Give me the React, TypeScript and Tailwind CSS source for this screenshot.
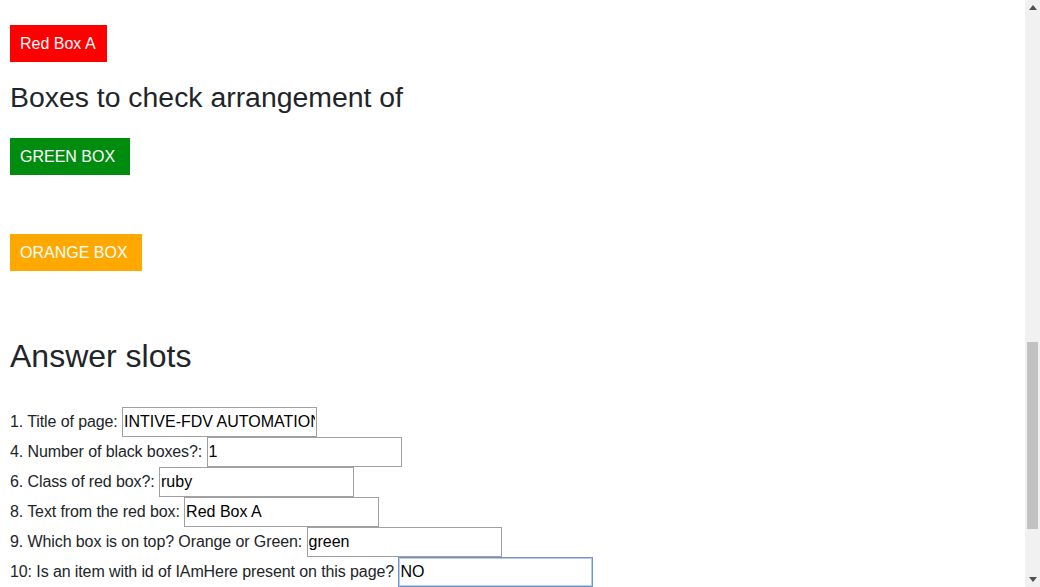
import { ReactNode } from 'react';

// ===== boxes =====
interface ColorBoxProps {
  children: ReactNode;
  className?: string;
}

function ColorBox({ children, className = '' }: ColorBoxProps) {
  return (
    <div className={`flex h-[37px] w-fit items-center pl-[10px] text-[16px] text-white ${className}`}>
      {children}
    </div>
  );
}

// ===== answer rows =====
interface AnswerRowProps {
  label: string;
  value: string;
  focused?: boolean;
}

function AnswerRow({ label, value, focused = false }: AnswerRowProps) {
  return (
    <div className="flex h-[30px] items-center">
      <span className="whitespace-pre text-[16px] tracking-[-0.1px]">{label} </span>
      <input
        defaultValue={value}
        autoFocus={focused}
        className={`h-[30px] w-[195px] border bg-white px-[1px] text-[16px] text-black outline-none ${
          focused ? 'border-[#7090d4] ring-1 ring-[#b9cbef] ring-inset' : 'border-[#a0a0a0]'
        }`}
      />
    </div>
  );
}

const answers = [
  { label: '1. Title of page:', value: 'INTIVE-FDV AUTOMATION' },
  { label: '4. Number of black boxes?:', value: '1' },
  { label: '6. Class of red box?:', value: 'ruby' },
  { label: '8. Text from the red box:', value: 'Red Box A' },
  { label: '9. Which box is on top? Orange or Green:', value: 'green' },
  { label: '10: Is an item with id of IAmHere present on this page?', value: 'NO', focused: true },
];

// ===== fake window scrollbar =====
function Arrow({ down = false }: { down?: boolean }) {
  return (
    <div className="flex h-[15px] items-center justify-center">
      <svg width="8" height="5" viewBox="0 0 8 5">
        <polygon points={down ? '0,0 8,0 4,5' : '4,0 8,5 0,5'} fill="#505050" />
      </svg>
    </div>
  );
}

function ScrollBar() {
  return (
    <div className="flex w-[15px] flex-col items-center bg-[#f1f1f1]">
      <Arrow />
      <div className="mt-[327px] h-[187px] w-[11px] bg-[#c1c1c1]" />
      <div className="flex-1" />
      <Arrow down />
    </div>
  );
}

export default function App() {
  return (
    <div className="flex h-[587px] w-full overflow-hidden bg-white font-['Liberation_Sans',Arial,sans-serif] text-[#212529]">
      <main className="flex-1 pl-[10px] pt-[25px]">
        <ColorBox className="bg-[#ff0000] pr-[11px]">Red Box A</ColorBox>

        <h3 className="mt-[18px] h-[34px] text-[28.4px] leading-[34px]">Boxes to check arrangement of</h3>

        <ColorBox className="mt-[24px] bg-[#008c0e] pr-[15px]">GREEN BOX</ColorBox>
        <ColorBox className="mt-[59px] bg-[#ffa800] pr-[14px]">ORANGE BOX</ColorBox>

        <h2 className="mt-[66px] h-[38px] text-[32px] leading-[38px]">Answer slots</h2>

        <div className="mt-[32px]">
          {answers.map((a) => (
            <AnswerRow key={a.label} label={a.label} value={a.value} focused={a.focused} />
          ))}
        </div>
      </main>
      <ScrollBar />
    </div>
  );
}
